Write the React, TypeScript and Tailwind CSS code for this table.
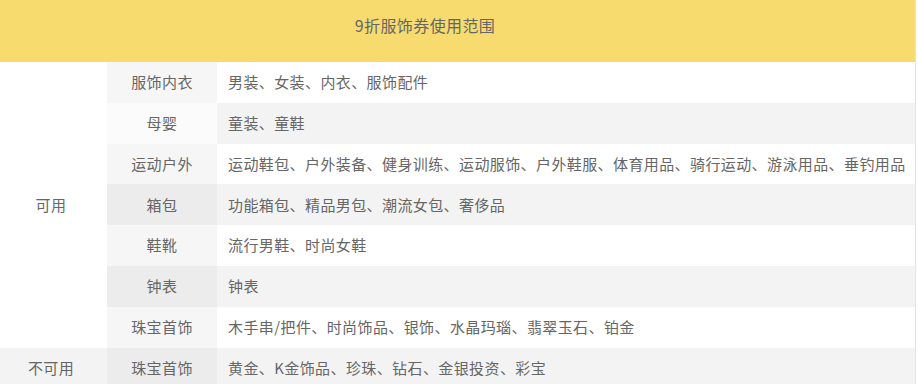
const rows = [
  { cat: "服饰内衣", items: "男装、女装、内衣、服饰配件" },
  { cat: "母婴", items: "童装、童鞋" },
  { cat: "运动户外", items: "运动鞋包、户外装备、健身训练、运动服饰、户外鞋服、体育用品、骑行运动、游泳用品、垂钓用品" },
  { cat: "箱包", items: "功能箱包、精品男包、潮流女包、奢侈品" },
  { cat: "鞋靴", items: "流行男鞋、时尚女鞋" },
  { cat: "钟表", items: "钟表" },
  { cat: "珠宝首饰", items: "木手串/把件、时尚饰品、银饰、水晶玛瑙、翡翠玉石、铂金" },
]

const catBg = ["bg-[#f6f6f6]", "bg-[#fbfbfb]", "bg-[#f6f6f6]", "bg-[#ececec]", "bg-[#f6f6f6]", "bg-[#ececec]", "bg-[#f6f6f6]"]

export default function App() {
  return (
    <div
      className="w-[918px] h-[384px] overflow-hidden bg-white text-[#666]"
      style={{ fontFamily: '"Noto Sans CJK SC", "Noto Sans", sans-serif' }}
    >
      <div className="w-[916px] border-r border-[#e3e3e3]">
        <div className="h-[62px] bg-[#f7db6f] flex justify-center pr-[65px] pt-[15px]">
          <h1 className="text-[16px] leading-[20px] tracking-[0.4px] font-normal">9折服饰券使用范围</h1>
        </div>

        <div className="grid grid-cols-[107px_110px_1fr] auto-rows-[40.8px] text-[15px] tracking-[0.4px]">
          <div className="row-span-7 flex items-center justify-center pr-[5px] bg-white">可用</div>
          {rows.map((r, i) => (
            <div key={r.cat} className="contents">
              <div className={`flex items-center justify-center ${catBg[i]}`}>{r.cat}</div>
              <div className={`flex items-center pl-[11px] whitespace-nowrap ${i % 2 ? "bg-[#f3f3f3]" : "bg-white"}`}>
                {r.items}
              </div>
            </div>
          ))}

          <div className="flex items-center justify-center pr-[5px] bg-[#f3f3f3]">不可用</div>
          <div className="flex items-center justify-center bg-[#ececec]">珠宝首饰</div>
          <div className="flex items-center pl-[11px] bg-[#f3f3f3]">黄金、K金饰品、珍珠、钻石、金银投资、彩宝</div>
        </div>
      </div>
    </div>
  )
}
